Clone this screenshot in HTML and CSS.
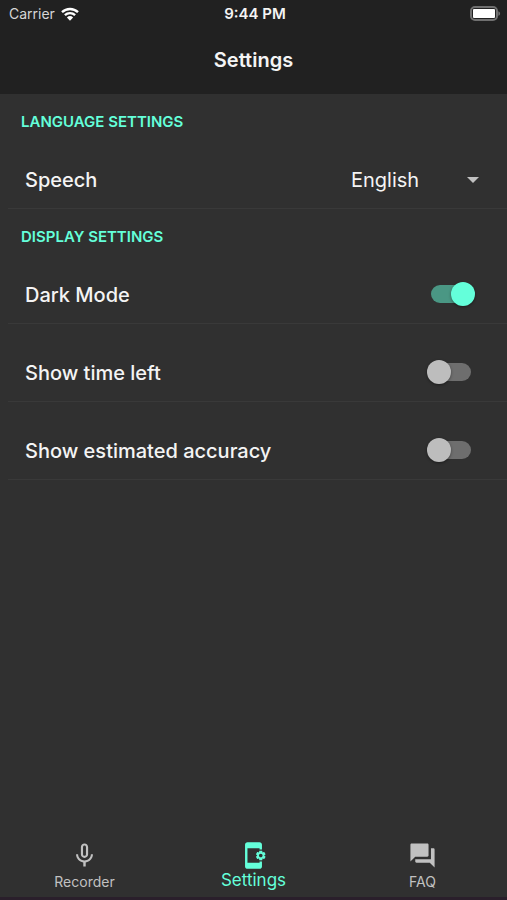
FILE: index.html
```html
<!DOCTYPE html>
<html lang="en">
  <head>
    <meta charset="UTF-8" />
    <meta name="viewport" content="width=device-width, initial-scale=1.0" />
    <title>Settings</title>
    <link rel="stylesheet" href="styles.css">
  </head>
  <body>
    <header class="header">
      <div class="status">
        <div class="carrier">
          <span>Carrier</span>
          <svg class="wifi" viewBox="0 0 18 14" aria-hidden="true">
            <path d="M1 5.2a11.6 11.6 0 0 1 16 0M3.9 8.2a7.4 7.4 0 0 1 10.2 0" />
            <path class="wifi_dot" d="M5.9 10.5a4.5 4.5 0 0 1 6.2 0L9 13.8z" />
          </svg>
        </div>
        <time>9:44 PM</time>
        <svg class="battery" viewBox="0 0 32 16" aria-hidden="true">
          <rect class="battery_case" x="2" y="1" width="26" height="13" rx="4" />
          <rect class="battery_level" x="4" y="3" width="22" height="9" rx="1" />
          <path class="battery_tip" d="M29.3 5.2c2.4.8 2.4 3.8 0 4.6z" />
        </svg>
      </div>
      <h1>Settings</h1>
    </header>

    <main class="content">
      <section>
        <h2>LANGUAGE SETTINGS</h2>
        <div class="row">
          <label for="speech">Speech</label>
          <div class="dropdown">
            <select id="speech">
              <option>English</option>
            </select>
            <svg viewBox="0 0 12 6" aria-hidden="true"><path d="M0 0h12L6 6z" /></svg>
          </div>
        </div>
      </section>

      <section>
        <h2>DISPLAY SETTINGS</h2>
        <div class="rows">
          <div class="row">
            <label for="dark">Dark Mode</label>
            <input class="switch" type="checkbox" id="dark" checked>
          </div>
          <div class="row">
            <label for="time">Show time left</label>
            <input class="switch" type="checkbox" id="time">
          </div>
          <div class="row">
            <label for="accuracy">Show estimated accuracy</label>
            <input class="switch" type="checkbox" id="accuracy">
          </div>
        </div>
      </section>
    </main>

    <nav class="tabs">
      <a href="#recorder">
        <svg viewBox="0 0 24 24" aria-hidden="true"><path d="M12 14c1.66 0 3-1.34 3-3V5c0-1.66-1.34-3-3-3S9 3.34 9 5v6c0 1.66 1.34 3 3 3zm-1.2-9.1c0-.66.54-1.2 1.2-1.2s1.2.54 1.2 1.2l-.01 6.2c0 .66-.53 1.2-1.19 1.2s-1.2-.54-1.2-1.2V4.9zM17.3 11c0 3-2.54 5.1-5.3 5.1S6.7 14 6.7 11H5c0 3.41 2.72 6.23 6 6.72V21h2v-3.28c3.28-.48 6-3.3 6-6.72h-1.7z" /></svg>
        <span>Recorder</span>
      </a>
      <a href="#settings" class="active" aria-current="page">
        <svg viewBox="0 0 24 24" aria-hidden="true"><path d="M21.81 12.74l-.82-.63v-.22l.8-.63c.16-.12.2-.34.1-.51l-.85-1.48c-.07-.13-.21-.2-.35-.2-.05 0-.1.01-.15.03l-.95.38c-.08-.05-.11-.07-.19-.11l-.15-1.01c-.03-.21-.2-.36-.4-.36h-1.71c-.2 0-.37.15-.4.34l-.14 1.01c-.03.02-.07.03-.1.05l-.09.06-.95-.38c-.05-.02-.1-.03-.15-.03-.14 0-.27.07-.35.2l-.85 1.48c-.1.17-.06.39.1.51l.8.63v.23l-.8.63c-.16.12-.2.34-.1.51l.85 1.48c.07.13.21.2.35.2.05 0 .1-.01.15-.03l.95-.37c.08.05.12.07.2.11l.15 1.01c.03.2.2.34.4.34h1.71c.2 0 .37-.15.4-.34l.15-1.01c.03-.02.07-.03.1-.05l.09-.06.95.38c.05.02.1.03.15.03.14 0 .27-.07.35-.2l.85-1.48c.1-.17.06-.39-.1-.51zM18 13.5c-.83 0-1.5-.67-1.5-1.5s.67-1.5 1.5-1.5 1.5.67 1.5 1.5-.67 1.5-1.5 1.5zM17 18H7V6h10v1h2V3c0-1.1-.9-2-2-2H7c-1.1 0-2 .9-2 2v18c0 1.1.9 2 2 2h10c1.1 0 2-.9 2-2v-4h-2v1z" /></svg>
        <span>Settings</span>
      </a>
      <a href="#faq">
        <svg viewBox="0 0 24 24" aria-hidden="true"><path d="M21 6h-2v9H6v2c0 .55.45 1 1 1h11l4 4V7c0-.55-.45-1-1-1zm-4 6V3c0-.55-.45-1-1-1H3c-.55 0-1 .45-1 1v14l4-4h10c.55 0 1-.45 1-1z" /></svg>
        <span>FAQ</span>
      </a>
    </nav>
  </body>
</html>
```
FILE: styles.css
```css
*,
*::before,
*::after {
  box-sizing: border-box;
}
body {
  min-height: 100vh;
  display: flex;
  flex-direction: column;
  margin: 0;
  background: #303030;
  color: #f4f4f4;
  font-family: Inter, Roboto, "Liberation Sans", sans-serif;
  border-bottom: 3px solid #2a1f2b;
}
h1,
h2 {
  margin: 0;
}

.header {
  height: 94px;
  background: #212121;
}
.status {
  display: grid;
  grid-template-columns: 1fr auto 1fr;
  align-items: center;
  height: 27px;
  padding: 0 6px 0 9px;
  font-size: 14px;
}
.status time {
  font-size: 15px;
  font-weight: 600;
}
.carrier {
  display: flex;
  align-items: center;
  gap: 6px;
  color: #d6d6d6;
}
.wifi {
  width: 18px;
  height: 14px;
  fill: none;
  stroke: #fff;
  stroke-width: 2.4;
}
.wifi_dot {
  fill: #fff;
  stroke: none;
}
.battery {
  width: 32px;
  height: 16px;
  justify-self: end;
}
.battery_case {
  fill: none;
  stroke: #707070;
  stroke-width: 2;
}
.battery_level {
  fill: #fff;
}
.battery_tip {
  fill: #707070;
}
h1 {
  padding-top: 21px;
  font-size: 20px;
  line-height: 24px;
  font-weight: 600;
  text-align: center;
}

.content {
  flex: 1;
}
h2 {
  padding: 19px 21px 20px;
  color: #64ffda;
  font-size: 15px;
  line-height: 18px;
  font-weight: 600;
}
.rows {
  display: grid;
  gap: 20px;
}
.row {
  display: flex;
  align-items: center;
  justify-content: space-between;
  height: 58px;
  margin-left: 8px;
  padding: 0 32px 0 17px;
  border-bottom: 1px solid #393939;
  font-size: 20px;
  font-weight: 500;
}

.dropdown {
  display: grid;
  align-items: center;
  width: 124px;
}
.dropdown select,
.dropdown svg {
  grid-area: 1 / 1;
}
.dropdown select {
  appearance: none;
  padding: 0;
  border: 0;
  background: none;
  color: inherit;
  font: inherit;
  font-weight: 400;
}
.dropdown svg {
  width: 12px;
  height: 6px;
  justify-self: end;
  margin-right: -4px;
  fill: #c1c1c1;
  pointer-events: none;
}

.switch {
  appearance: none;
  position: relative;
  width: 48px;
  height: 24px;
  margin: 0 0 1px;
}
.switch::before {
  content: "";
  position: absolute;
  inset: 3px 4px;
  border-radius: 9px;
  background: #6e6e6e;
}
.switch::after {
  content: "";
  position: absolute;
  top: 0;
  left: 0;
  width: 24px;
  height: 24px;
  border-radius: 50%;
  background: #bdbdbd;
  box-shadow: 0 1px 3px rgba(0, 0, 0, 0.4);
}
.switch:checked::before {
  background: #4a9784;
}
.switch:checked::after {
  left: 24px;
  background: #64ffda;
}

.tabs {
  display: grid;
  grid-template-columns: repeat(3, 1fr);
  height: 56px;
}
.tabs a {
  display: flex;
  flex-direction: column;
  align-items: center;
  color: #c1c1c1;
  font-size: 14px;
  line-height: 24px;
  text-decoration: none;
}
.tabs svg {
  width: 29px;
  height: 29px;
  fill: currentColor;
}
.tabs .active {
  color: #64ffda;
  font-size: 17px;
  line-height: 20px;
}
```
